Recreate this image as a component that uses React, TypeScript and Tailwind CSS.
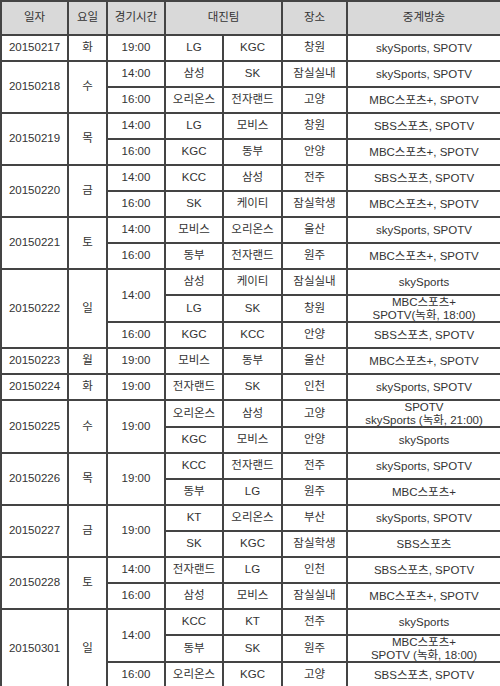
import React from "react";

type Game = { t1: string; t2: string; venue: string; tv: string[] };
type Slot = { time: string; games: Game[] };
type Group = { date: string; day: string; slots: Slot[] };

const g = (t1: string, t2: string, venue: string, ...tv: string[]): Game => ({ t1, t2, venue, tv });

const data: Group[] = [
  { date: "20150217", day: "화", slots: [{ time: "19:00", games: [g("LG", "KGC", "창원", "skySports, SPOTV")] }] },
  {
    date: "20150218",
    day: "수",
    slots: [
      { time: "14:00", games: [g("삼성", "SK", "잠실실내", "skySports, SPOTV")] },
      { time: "16:00", games: [g("오리온스", "전자랜드", "고양", "MBC스포츠+, SPOTV")] },
    ],
  },
  {
    date: "20150219",
    day: "목",
    slots: [
      { time: "14:00", games: [g("LG", "모비스", "창원", "SBS스포츠, SPOTV")] },
      { time: "16:00", games: [g("KGC", "동부", "안양", "MBC스포츠+, SPOTV")] },
    ],
  },
  {
    date: "20150220",
    day: "금",
    slots: [
      { time: "14:00", games: [g("KCC", "삼성", "전주", "SBS스포츠, SPOTV")] },
      { time: "16:00", games: [g("SK", "케이티", "잠실학생", "MBC스포츠+, SPOTV")] },
    ],
  },
  {
    date: "20150221",
    day: "토",
    slots: [
      { time: "14:00", games: [g("모비스", "오리온스", "울산", "skySports, SPOTV")] },
      { time: "16:00", games: [g("동부", "전자랜드", "원주", "MBC스포츠+, SPOTV")] },
    ],
  },
  {
    date: "20150222",
    day: "일",
    slots: [
      {
        time: "14:00",
        games: [g("삼성", "케이티", "잠실실내", "skySports"), g("LG", "SK", "창원", "MBC스포츠+", "SPOTV(녹화, 18:00)")],
      },
      { time: "16:00", games: [g("KGC", "KCC", "안양", "SBS스포츠, SPOTV")] },
    ],
  },
  { date: "20150223", day: "월", slots: [{ time: "19:00", games: [g("모비스", "동부", "울산", "MBC스포츠+, SPOTV")] }] },
  { date: "20150224", day: "화", slots: [{ time: "19:00", games: [g("전자랜드", "SK", "인천", "skySports, SPOTV")] }] },
  {
    date: "20150225",
    day: "수",
    slots: [
      {
        time: "19:00",
        games: [g("오리온스", "삼성", "고양", "SPOTV", "skySports (녹화, 21:00)"), g("KGC", "모비스", "안양", "skySports")],
      },
    ],
  },
  {
    date: "20150226",
    day: "목",
    slots: [
      { time: "19:00", games: [g("KCC", "전자랜드", "전주", "skySports, SPOTV"), g("동부", "LG", "원주", "MBC스포츠+")] },
    ],
  },
  {
    date: "20150227",
    day: "금",
    slots: [
      { time: "19:00", games: [g("KT", "오리온스", "부산", "skySports, SPOTV"), g("SK", "KGC", "잠실학생", "SBS스포츠")] },
    ],
  },
  {
    date: "20150228",
    day: "토",
    slots: [
      { time: "14:00", games: [g("전자랜드", "LG", "인천", "SBS스포츠, SPOTV")] },
      { time: "16:00", games: [g("삼성", "모비스", "잠실실내", "MBC스포츠+, SPOTV")] },
    ],
  },
  {
    date: "20150301",
    day: "일",
    slots: [
      {
        time: "14:00",
        games: [g("KCC", "KT", "전주", "skySports"), g("동부", "SK", "원주", "MBC스포츠+", "SPOTV (녹화, 18:00)")],
      },
      { time: "16:00", games: [g("오리온스", "KGC", "고양", "SBS스포츠, SPOTV")] },
    ],
  },
];

const cell = "border-2 border-[#444] text-center align-middle p-0";

export default function App() {
  const rows: React.ReactNode[] = [];
  data.forEach((grp, gi) => {
    const total = grp.slots.reduce((n, s) => n + s.games.length, 0);
    let first = true;
    grp.slots.forEach((slot, si) => {
      slot.games.forEach((game, ki) => {
        rows.push(
          <tr key={`${gi}-${si}-${ki}`} className="h-[26px]">
            {first && (
              <>
                <td rowSpan={total} className={cell}>
                  {grp.date}
                </td>
                <td rowSpan={total} className={cell}>
                  {grp.day}
                </td>
              </>
            )}
            {ki === 0 && (
              <td rowSpan={slot.games.length} className={cell}>
                {slot.time}
              </td>
            )}
            <td className={cell}>{game.t1}</td>
            <td className={cell}>{game.t2}</td>
            <td className={cell}>{game.venue}</td>
            <td className={`${cell} leading-[12.5px]`}>
              {game.tv.map((t, i) => (
                <div key={i}>{t}</div>
              ))}
            </td>
          </tr>
        );
        first = false;
      });
    });
  });

  return (
    <div
      className="w-[500px] h-[686px] overflow-hidden bg-white text-[#333] text-[11.5px]"
      style={{ fontFamily: '"Liberation Sans", "Noto Sans CJK KR", sans-serif' }}
    >
      <table className="w-[500px] border-collapse table-fixed">
        <colgroup>
          <col className="w-[67px]" />
          <col className="w-[39px]" />
          <col className="w-[58px]" />
          <col className="w-[58px]" />
          <col className="w-[59px]" />
          <col className="w-[65px]" />
          <col className="w-[154px]" />
        </colgroup>
        <thead>
          <tr className="h-[34px] bg-[#d9d9d9]">
            <th className={`${cell} font-normal`}>일자</th>
            <th className={`${cell} font-normal`}>요일</th>
            <th className={`${cell} font-normal`}>경기시간</th>
            <th colSpan={2} className={`${cell} font-normal`}>
              대진팀
            </th>
            <th className={`${cell} font-normal`}>장소</th>
            <th className={`${cell} font-normal`}>중계방송</th>
          </tr>
        </thead>
        <tbody>{rows}</tbody>
      </table>
    </div>
  );
}
